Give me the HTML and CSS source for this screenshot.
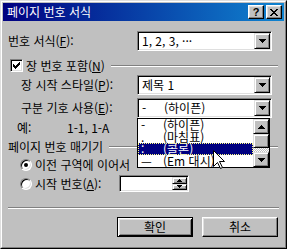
FILE: index.html
```html
<!DOCTYPE html>
<html lang="ko">
<head>
<meta charset="utf-8">
<title>페이지 번호 서식</title>
<link rel="stylesheet" href="styles.css">
</head>
<body>
<div class="window">
  <div class="frame">
    <div class="titlebar">
      <span class="title">페이지 번호 서식</span>
      <div class="tb-btns">
        <span class="tb-btn help">?</span>
        <span class="tb-btn close"><svg width="8" height="7" viewBox="0 0 8 7" shape-rendering="crispEdges"><path d="M0 0h2v1H0zM6 0h2v1H6zM1 1h2v1H1zM5 1h2v1H5zM2 2h4v1H2zM3 3h2v1H3zM2 4h4v1H2zM1 5h2v1H1zM5 5h2v1H5zM0 6h2v1H0zM6 6h2v1H6z" fill="#000"/></svg></span>
      </div>
    </div>
    <div class="content">
      <div class="row">
        <span class="lbl">번호 서식(<u>F</u>):</span>
        <div class="combo">
          <span class="combo-text">1, 2, 3, ···</span>
          <span class="drop-btn"><svg width="7" height="4" viewBox="0 0 7 4" shape-rendering="crispEdges"><path d="M0 0h7v1H0zM1 1h5v1H1zM2 2h3v1H2zM3 3h1v1H3z" fill="#000"/></svg></span>
        </div>
      </div>
      <div class="group g-chapter">
        <span class="check"><svg width="7" height="7" viewBox="0 0 7 7" shape-rendering="crispEdges"><path d="M6 0h1v1H6zM5 1h2v1H5zM0 2h1v1H0zM4 2h3v1H4zM0 3h2v1H0zM3 3h3v1H3zM0 4h5v1H0zM1 5h3v1H1zM2 6h1v1H2z" fill="#000"/></svg></span>
        <span class="glabel">장 번호 포함(<u>N</u>)</span>
        <span class="gline"></span>
      </div>
      <div class="row sub">
        <span class="lbl">장 시작 스타일(<u>P</u>):</span>
        <div class="combo">
          <span class="combo-text">제목 1</span>
          <span class="drop-btn"><svg width="7" height="4" viewBox="0 0 7 4" shape-rendering="crispEdges"><path d="M0 0h7v1H0zM1 1h5v1H1zM2 2h3v1H2zM3 3h1v1H3z" fill="#000"/></svg></span>
        </div>
      </div>
      <div class="row sub">
        <span class="lbl">구분 기호 사용(<u>E</u>):</span>
        <div class="combo">
          <span class="combo-text"><span class="sym">-</span>(하이픈)</span>
          <span class="drop-btn"><svg width="7" height="4" viewBox="0 0 7 4" shape-rendering="crispEdges"><path d="M0 0h7v1H0zM1 1h5v1H1zM2 2h3v1H2zM3 3h1v1H3z" fill="#000"/></svg></span>
          <div class="droplist">
            <div class="items">
              <div class="item"><span class="sym">-</span>(하이픈)</div>
              <div class="item"><span class="sym">.</span>(마침표)</div>
              <div class="item sel"><span class="sym">:</span>(콜론)</div>
              <div class="item"><span class="sym">—</span>(Em 대시)</div>
            </div>
            <div class="scrollbar">
              <span class="sb-btn up"><svg width="7" height="4" viewBox="0 0 7 4" shape-rendering="crispEdges"><path d="M3 0h1v1H3zM2 1h3v1H2zM1 2h5v1H1zM0 3h7v1H0z" fill="#000"/></svg></span>
              <span class="sb-thumb"></span>
              <span class="sb-track"></span>
              <span class="sb-btn down"><svg width="7" height="4" viewBox="0 0 7 4" shape-rendering="crispEdges"><path d="M0 0h7v1H0zM1 1h5v1H1zM2 2h3v1H2zM3 3h1v1H3z" fill="#000"/></svg></span>
            </div>
          </div>
        </div>
      </div>
      <div class="example"><span class="ex-lbl">예:</span><span>1-1, 1-A</span></div>
      <div class="group g-numbering">
        <span class="glabel">페이지 번호 매기기</span>
        <span class="gline"></span>
      </div>
      <div class="radio-row">
        <span class="radio on"><span class="dot"></span></span>
        <span class="rlabel">이전 구역에 이어서</span>
      </div>
      <div class="radio-row r2">
        <span class="radio"></span>
        <span class="rlabel start">시작 번호(<u>A</u>):</span>
        <div class="spin">
          <span class="spin-field"></span>
          <span class="spin-btns">
            <span class="spin-btn"><svg width="5" height="3" viewBox="0 0 5 3" shape-rendering="crispEdges"><path d="M2 0h1v1H2zM1 1h3v1H1zM0 2h5v1H0z" fill="#000"/></svg></span>
            <span class="spin-btn"><svg width="5" height="3" viewBox="0 0 5 3" shape-rendering="crispEdges"><path d="M0 0h5v1H0zM1 1h3v1H1zM2 2h1v1H2z" fill="#000"/></svg></span>
          </span>
        </div>
      </div>
      <div class="sep"></div>
      <div class="buttons">
        <span class="btn default">확인</span>
        <span class="btn">취소</span>
      </div>
    </div>
  </div>
  <svg class="cursor" width="12" height="20" viewBox="0 0 12 20"><path d="M0.5 0.5V16.5L4.5 12.5L7.5 18.5L9.5 17.5L6.5 11.5H11.5Z" fill="#fff" stroke="#000" stroke-width="1"/></svg>
</div>
</body>
</html>
```
FILE: styles.css
```css
* { box-sizing: border-box; margin: 0; padding: 0; }
body {
  margin: 0;
  width: 287px;
  height: 249px;
  overflow: hidden;
  background: #c0c0c0;
  font-family: "Noto Sans CJK KR", "Noto Sans", sans-serif;
  font-size: 12px;
  line-height: 12px;
  color: #000;
}
u { text-decoration: underline; text-underline-offset: 1px; }
.window {
  position: relative;
  width: 287px;
  height: 249px;
  border: 1px solid;
  border-color: #dfdfdf #000 #000 #dfdfdf;
  background: #c0c0c0;
}
.frame {
  height: 100%;
  border: 1px solid;
  border-color: #fff #808080 #808080 #fff;
  padding: 1px;
  display: flex;
  flex-direction: column;
}
.titlebar {
  height: 18px;
  flex: none;
  background: linear-gradient(to right, #000080, #1084d0);
  display: flex;
  align-items: center;
  padding: 0 2px;
  color: #fff;
}
.title { padding-left: 2px; letter-spacing: 0; }
.tb-btns { margin-left: auto; display: flex; gap: 2px; }
.tb-btn {
  width: 16px;
  height: 14px;
  background: #c0c0c0;
  border: 1px solid;
  border-color: #fff #000 #000 #fff;
  box-shadow: inset -1px -1px #808080, inset 1px 1px #dfdfdf;
  display: flex;
  align-items: center;
  justify-content: center;
  color: #000;
  font: bold 11px/1 "Liberation Sans", sans-serif;
}
.content {
  flex: 1;
  padding: 0 5px;
  display: flex;
  flex-direction: column;
}
.row {
  margin-top: 10px;
  height: 20px;
  display: flex;
  align-items: center;
}
.row.sub { margin-top: 3px; padding-left: 13px; }
.combo {
  position: relative;
  margin-left: auto;
  margin-right: 7px;
  width: 135px;
  height: 20px;
  border: 1px solid;
  border-color: #808080 #fff #fff #808080;
  box-shadow: inset 1px 1px #000, inset -1px -1px #dfdfdf;
  background: #fff;
  padding: 1px;
  display: flex;
  align-items: center;
}
.combo-text { flex: 1; padding-left: 3px; display: flex; white-space: nowrap; }
.sym { display: inline-block; width: 22px; }
.drop-btn {
  width: 16px;
  height: 16px;
  background: #c0c0c0;
  border: 1px solid;
  border-color: #dfdfdf #000 #000 #dfdfdf;
  box-shadow: inset 1px 1px #fff, inset -1px -1px #808080;
  display: flex;
  align-items: center;
  justify-content: center;
}
.group {
  display: flex;
  align-items: center;
}
.g-chapter { margin-top: 8px; height: 13px; }
.check {
  margin-left: 2px;
  width: 13px;
  height: 13px;
  border: 1px solid;
  border-color: #808080 #fff #fff #808080;
  box-shadow: inset 1px 1px #000, inset -1px -1px #dfdfdf;
  background: #fff;
  display: flex;
  align-items: center;
  justify-content: center;
}
.glabel { margin-left: 3px; white-space: nowrap; }
.g-numbering .glabel { margin-left: 0; }
.gline {
  flex: 1;
  margin-left: 6px;
  margin-right: 1px;
  height: 2px;
  border-top: 1px solid #808080;
  border-bottom: 1px solid #fff;
}
.droplist {
  position: absolute;
  left: -1px;
  top: 19px;
  width: 133px;
  height: 50px;
  border: 1px solid #000;
  background: #fff;
  display: flex;
  z-index: 5;
}
.items { flex: 1; display: flex; flex-direction: column; }
.item {
  height: 12px;
  display: flex;
  align-items: center;
  padding-left: 3px;
  white-space: nowrap;
  overflow: hidden;
}
.item.sel {
  background: #000080;
  color: #fff;
  outline: 1px dotted #ffff80;
  outline-offset: -1px;
}
.scrollbar {
  width: 16px;
  display: flex;
  flex-direction: column;
}
.sb-btn, .sb-thumb {
  background: #c0c0c0;
  border: 1px solid;
  border-color: #dfdfdf #000 #000 #dfdfdf;
  box-shadow: inset 1px 1px #fff, inset -1px -1px #808080;
  display: flex;
  align-items: center;
  justify-content: center;
}
.sb-btn { height: 15px; }
.sb-thumb { height: 14px; }
.sb-track {
  flex: 1;
  background: repeating-conic-gradient(#fff 0 25%, #c0c0c0 0 50%) 0 0 / 2px 2px;
}
.example {
  margin-top: 4px;
  height: 12px;
  padding-left: 9px;
  display: flex;
  align-items: center;
}
.ex-lbl { width: 50px; }
.g-numbering { margin-top: 7px; height: 12px; }
.radio-row {
  margin-top: 6px;
  height: 12px;
  padding-left: 12px;
  display: flex;
  align-items: center;
}
.radio-row.r2 { margin-top: 4px; height: 17px; }
.radio {
  width: 12px;
  height: 12px;
  flex: none;
  border-radius: 50%;
  border: 1px solid;
  border-color: #808080 #fff #fff #808080;
  box-shadow: inset 1px 1px #000, inset -1px -1px #dfdfdf;
  background: #fff;
  display: flex;
  align-items: center;
  justify-content: center;
}
.dot { width: 4px; height: 4px; border-radius: 50%; background: #000; }
.rlabel { margin-left: 3px; white-space: nowrap; }
.rlabel.start { width: 84px; }
.spin {
  width: 70px;
  height: 17px;
  border: 1px solid;
  border-color: #808080 #fff #fff #808080;
  box-shadow: inset 1px 1px #000, inset -1px -1px #dfdfdf;
  background: #fff;
  padding: 1px;
  display: flex;
}
.spin-field { flex: 1; }
.spin-btns { width: 15px; display: flex; flex-direction: column; }
.spin-btn {
  flex: 1;
  background: #c0c0c0;
  border: 1px solid;
  border-color: #dfdfdf #000 #000 #dfdfdf;
  box-shadow: inset 1px 1px #fff, inset -1px -1px #808080;
  display: flex;
  align-items: center;
  justify-content: center;
}
.sep {
  margin-top: 15px;
  height: 2px;
  border-top: 1px solid #808080;
  border-bottom: 1px solid #fff;
}
.buttons {
  margin-top: 8px;
  display: flex;
  justify-content: flex-end;
  gap: 9px;
  padding-right: 1px;
}
.btn {
  width: 76px;
  height: 20px;
  background: #c0c0c0;
  border: 1px solid;
  border-color: #fff #000 #000 #fff;
  box-shadow: inset -1px -1px #808080, inset 1px 1px #dfdfdf;
  display: flex;
  align-items: center;
  justify-content: center;
}
.btn.default {
  border: 1px solid #000;
  box-shadow: inset 1px 1px #fff, inset -1px -1px #000, inset 2px 2px #dfdfdf, inset -2px -2px #808080;
}
.cursor {
  position: absolute;
  left: 212px;
  top: 149px;
  z-index: 10;
}
```
